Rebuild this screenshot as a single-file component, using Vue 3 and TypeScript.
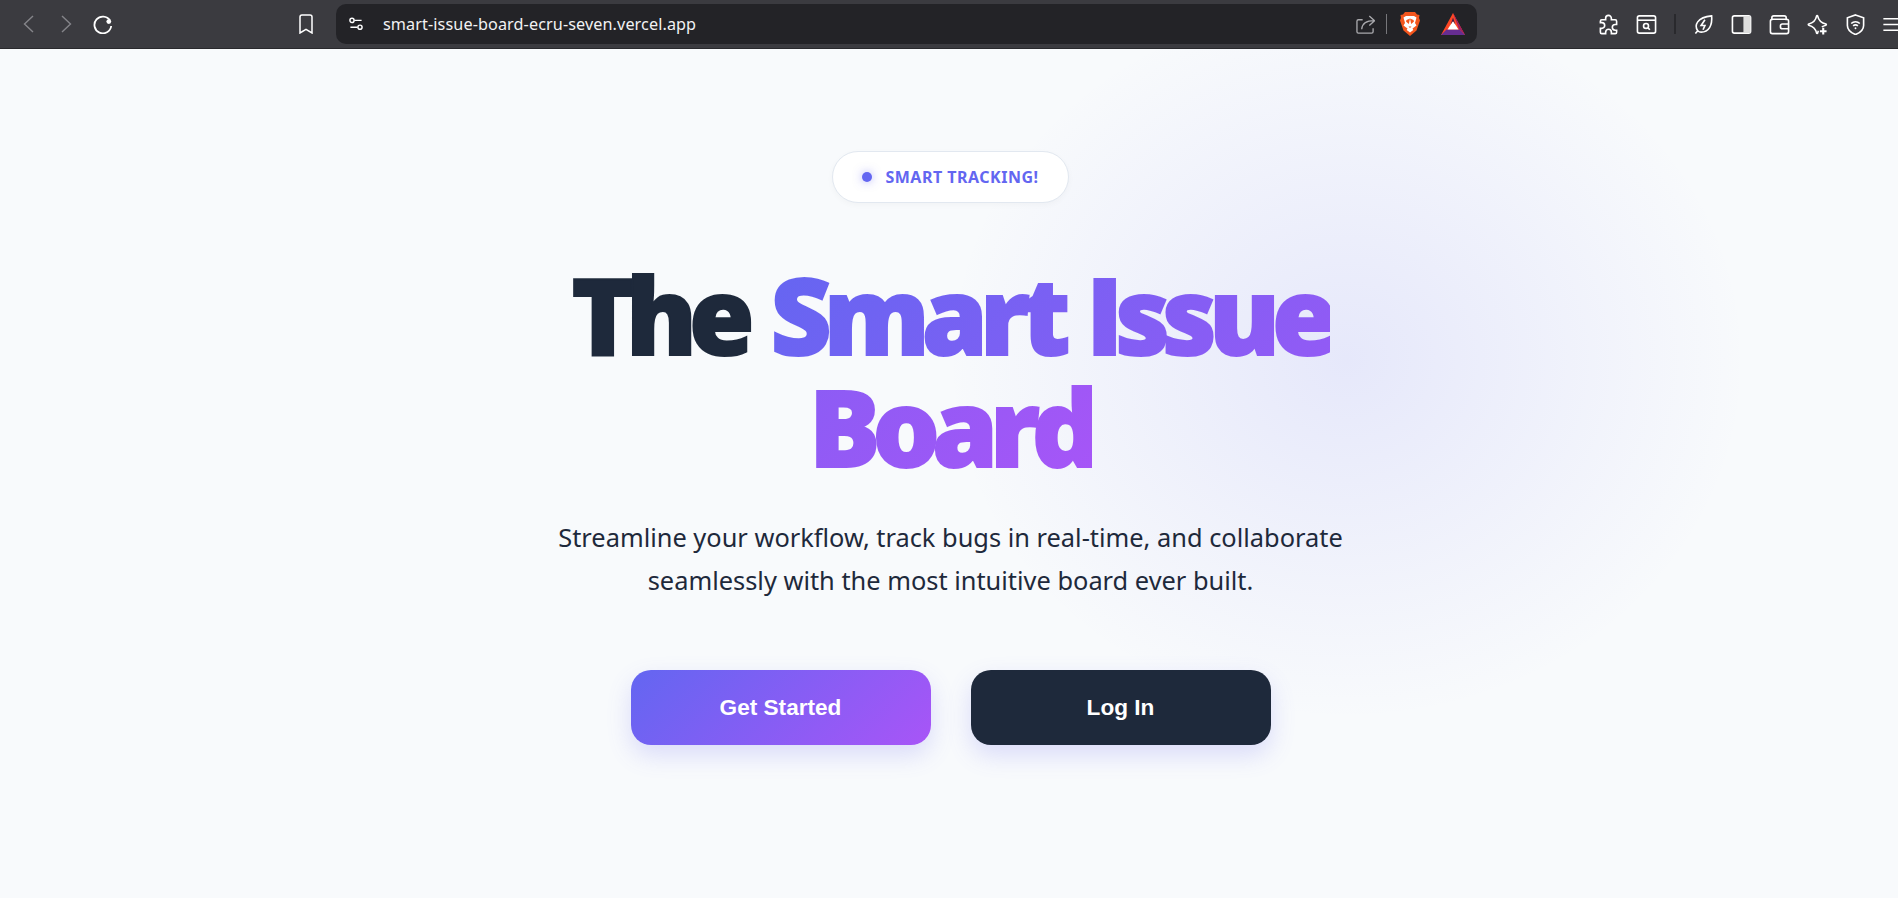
<script setup lang="ts">
defineOptions({ name: "App" });
</script>

<template>
  <div class="window">
    <header class="toolbar">
      <div class="nav">
        <svg class="icon dim" viewBox="0 0 20 20"><path d="M14 2 5.500 10 14 18" /></svg>
        <svg class="icon dim" viewBox="0 0 20 20"><path d="M6 2l8.500 8L6 18" /></svg>
        <svg class="icon" viewBox="0 0 20 20">
          <path d="M17 6.500A8.400 8.400 0 1 0 18.200 12" stroke-width="1.800" />
          <circle cx="15.800" cy="7.600" r="2.400" fill="#fff" stroke="none" />
        </svg>
      </div>
      <svg class="icon bookmark" viewBox="0 0 20 20"><path d="M4 3a2 2 0 0 1 2-2h8a2 2 0 0 1 2 2v16l-6-3.600L4 19z" /></svg>
      <div class="address">
        <svg class="icon site" viewBox="0 0 20 20">
          <circle cx="5" cy="5.500" r="2.600" /><path d="M8 5.500h9M3 14h9" /><circle cx="15" cy="14" r="2.600" />
        </svg>
        <span class="url">smart-issue-board-ecru-seven.vercel.app</span>
        <svg class="icon share" viewBox="0 0 20 20">
          <path d="M7 5H2.500A1.500 1.500 0 0 0 1 6.500V17.500A1.500 1.500 0 0 0 2.500 19H16.500A1.500 1.500 0 0 0 18 17.500V14" />
          <path d="M6 15c.5-6 4-9 13-9M14 1l5.500 5-5.500 5" />
        </svg>
        <span class="bar-sep"></span>
        <svg class="brave" viewBox="0 0 20 24">
          <path fill="#f4561d" d="M5 0h10l2 2.500 2.500.5-.5 3 1 2.500-3.500 10L10 24l-6.500-5.500L0 8.500 1 6 .5 3 3 2.500z" />
          <path fill="#fff" d="M6 4h8l2.500 1.500L15 11l1.500 2.500-4 3 .8 1.500L10 20.500 6.700 18l.8-1.500-4-3L5 11 3.500 5.500z" />
          <path fill="#f4561d" d="M10 6.500 8.800 12 6 9.500 6.500 8zM10 6.500 11.200 12 14 9.500 13.500 8zM8.500 14.500h3L10 16z" />
        </svg>
        <svg class="bat" viewBox="0 0 24 22">
          <path fill="#ff4724" d="M12 0 0 22h24z" />
          <path fill="#9e1f63" d="M12 0 24 22 18 16z" />
          <path fill="#662d91" d="M0 22 5.500 16.500h13L24 22z" />
          <path fill="#fff" d="M12 8 6.500 16.500h11z" />
          <path fill="#3b1a4a" d="M12 4.500 9.700 11.500 12 8l2.300 3.500z" />
        </svg>
      </div>
      <div class="extensions">
        <svg class="icon" viewBox="0 0 22 22">
          <path d="M8 4.500a3 3 0 1 1 6 0V6h4a1.500 1.500 0 0 1 1.500 1.500V11H18a3 3 0 1 0 0 6h1.500v2A1.500 1.500 0 0 1 18 20.500H14V19a3 3 0 1 0-6 0v1.500H4A1.500 1.500 0 0 1 2.500 19v-4H4a3 3 0 1 0 0-6H2.500V7.500A1.500 1.500 0 0 1 4 6h4z" />
        </svg>
        <svg class="icon" viewBox="0 0 22 22">
          <rect x="1.500" y="2" width="19" height="18" rx="2" /><path d="M1.500 6.500h19" /><circle cx="10.500" cy="12.500" r="2.600" /><path d="m12.500 14.500 2 2" />
        </svg>
        <span class="ext-sep"></span>
        <svg class="icon" viewBox="0 0 22 22">
          <path d="M2.500 20.500 5 17.500C1 12 4 3.500 19.500 2c1 10-3 17-11 17-1.500 0-2.500-.5-3.500-1.500" />
          <path d="M12.500 6 8.500 12h4l-2 4.500" />
        </svg>
        <svg class="icon" viewBox="0 0 22 22">
          <rect x="1.500" y="2" width="19" height="18" rx="2" /><rect x="13" y="2" width="7.500" height="18" fill="#ddd" stroke="none" />
        </svg>
        <svg class="icon" viewBox="0 0 22 22">
          <path d="M3 6.500V4a2 2 0 0 1 2-2h11a2 2 0 0 1 2 2v2.500" /><rect x="1.500" y="5.500" width="19" height="15" rx="2" /><path d="M20.500 10.500H14a2 2 0 0 0-2 2v1a2 2 0 0 0 2 2h6.500" />
        </svg>
        <svg class="icon star" viewBox="0 0 22 22">
          <path d="M15.500 13.500c1.500-.8 3-1.500 4.300-1.800.6-.2.6-1 0-1.200C14.500 9.300 12.300 7 11.200 2.200c-.2-.6-1-.6-1.200 0C9 7 6.700 9.300 1.800 10.500c-.6.200-.6 1 0 1.200C6.700 13 9 15.200 10 19.800c.2.600 1 .6 1.200 0 .2-.8.400-1.500.7-2.200" />
          <path d="M17 14.500v7M13.500 18h7" stroke-width="2.200" />
        </svg>
        <svg class="icon" viewBox="0 0 22 22">
          <path d="M11 1 19.500 4v8c0 4.500-3.500 7.500-8.500 9.500C6 19.500 2.500 16.500 2.500 12V4z" />
          <path d="M6.500 10c2.500-2.500 6.500-2.500 9 0M8.500 12.500c1.500-1.300 3.500-1.300 5 0" /><circle cx="11" cy="15" r="1" fill="#fff" stroke="none" />
        </svg>
        <svg class="icon menu" viewBox="0 0 16 22"><path d="M0 5h16M0 11h16M0 17h16" /></svg>
      </div>
    </header>

    <main class="page">
      <div class="glow"></div>
      <section class="hero">
        <div class="badge"><span class="dot"></span>SMART TRACKING!</div>
        <h1 class="title">The <span class="accent">Smart Issue Board</span></h1>
        <p class="lead">Streamline your workflow, track bugs in real-time, and collaborate seamlessly with the most intuitive board ever built.</p>
        <div class="actions">
          <button class="btn primary" type="button">Get Started</button>
          <button class="btn dark" type="button">Log In</button>
        </div>
      </section>
    </main>
  </div>
</template>

<style>
html,
body {
  margin: 0;
  overflow: hidden;
}
</style>

<style scoped>
.window {
  display: flex;
  flex-direction: column;
  height: 898px;
  font-family: "Noto Sans", "Open Sans", sans-serif;
}

.toolbar {
  display: flex;
  align-items: center;
  flex: none;
  box-sizing: border-box;
  height: 49px;
  padding-left: 19px;
  overflow: hidden;
  background: #3b3b40;
  border-bottom: 1px solid #29292d;
}

.icon {
  display: block;
  flex: none;
  width: 20px;
  height: 20px;
  fill: none;
  stroke: #fff;
  stroke-width: 1.5;
}

.dim {
  stroke: #85858a;
  stroke-width: 1.4;
}

.nav {
  display: flex;
  align-items: center;
  gap: 17px;
}

.bookmark {
  margin-left: 183px;
}

.address {
  display: flex;
  flex: none;
  align-items: center;
  box-sizing: border-box;
  width: 1141px;
  height: 40px;
  margin-left: 20px;
  padding-left: 12px;
  background: #232327;
  border-radius: 10px;
}

.site {
  width: 16px;
  height: 16px;
  stroke-width: 1.8;
}

.url {
  flex: 1;
  margin-left: 19px;
  color: #f2f2f3;
  font-size: 16.2px;
  letter-spacing: 0.1px;
}

.share {
  stroke: #a9a9ad;
  width: 19px;
  height: 19px;
  stroke-width: 1.4;
}

.bar-sep {
  width: 1px;
  height: 20px;
  margin: 0 13px 0 11px;
  background: #77777b;
}

.brave {
  width: 20px;
  height: 24px;
}

.bat {
  width: 24px;
  height: 22px;
  margin: 0 12px 0 21px;
}

.extensions {
  display: flex;
  flex: none;
  align-items: center;
  gap: 17px;
  margin-left: 121px;
}

.extensions .icon {
  width: 21px;
  height: 21px;
  stroke-width: 1.7;
}

.extensions .menu {
  width: 16px;
}

.ext-sep {
  width: 2px;
  height: 20px;
  background: #29292d;
}

.page {
  position: relative;
  flex: 1;
  display: flex;
  justify-content: center;
  overflow: hidden;
  background: #f8fafc;
}

.glow {
  position: absolute;
  left: 947px;
  top: -49px;
  width: 800px;
  height: 720px;
  background: radial-gradient(closest-side, rgba(99, 102, 241, 0.12), rgba(99, 102, 241, 0));
}

.hero {
  position: relative;
  display: flex;
  flex-direction: column;
  align-items: center;
  width: 900px;
  margin-left: 3px;
  padding-top: 102px;
  text-align: center;
}

.badge {
  display: flex;
  align-items: center;
  box-sizing: border-box;
  gap: 13px;
  height: 52px;
  padding: 0 29px;
  color: #6366f1;
  font-size: 16px;
  font-weight: 700;
  letter-spacing: 0.5px;
  background: #fff;
  border: 1px solid #e2e8f0;
  border-radius: 26px;
  box-shadow: 0 2px 6px rgba(15, 23, 42, 0.03);
}

.dot {
  width: 10px;
  height: 10px;
  background: #6366f1;
  border-radius: 50%;
  box-shadow: 0 0 10px rgba(99, 102, 241, 0.5);
}

.title {
  width: 800px;
  margin: 55px 0 0;
  color: #1e293b;
  font-family: "Open Sans", "Noto Sans", sans-serif;
  font-size: 106px;
  font-weight: 800;
  line-height: 112px;
  letter-spacing: -0.075em;
  word-spacing: 0.04em;
  -webkit-text-stroke: 2px #1e293b;
}

.accent {
  background: linear-gradient(135deg, #6366f1, #a855f7);
  -webkit-background-clip: text;
  background-clip: text;
  color: transparent;
  -webkit-text-stroke: 2px transparent;
}

.lead {
  width: 820px;
  margin: 34px 0 0;
  color: #1e293b;
  font-size: 25.4px;
  line-height: 43px;
}

.actions {
  display: flex;
  gap: 40px;
  margin-top: 68px;
}

.btn {
  width: 300px;
  height: 75px;
  color: #fff;
  font-family: "Liberation Sans", Arial, sans-serif;
  font-size: 22.6px;
  font-weight: 700;
  border: 0;
  border-radius: 20px;
  box-shadow: 0 10px 25px rgba(99, 102, 241, 0.2);
}

.primary {
  background: linear-gradient(135deg, #6366f1, #a855f7);
}

.dark {
  background: #1e293b;
}
</style>
